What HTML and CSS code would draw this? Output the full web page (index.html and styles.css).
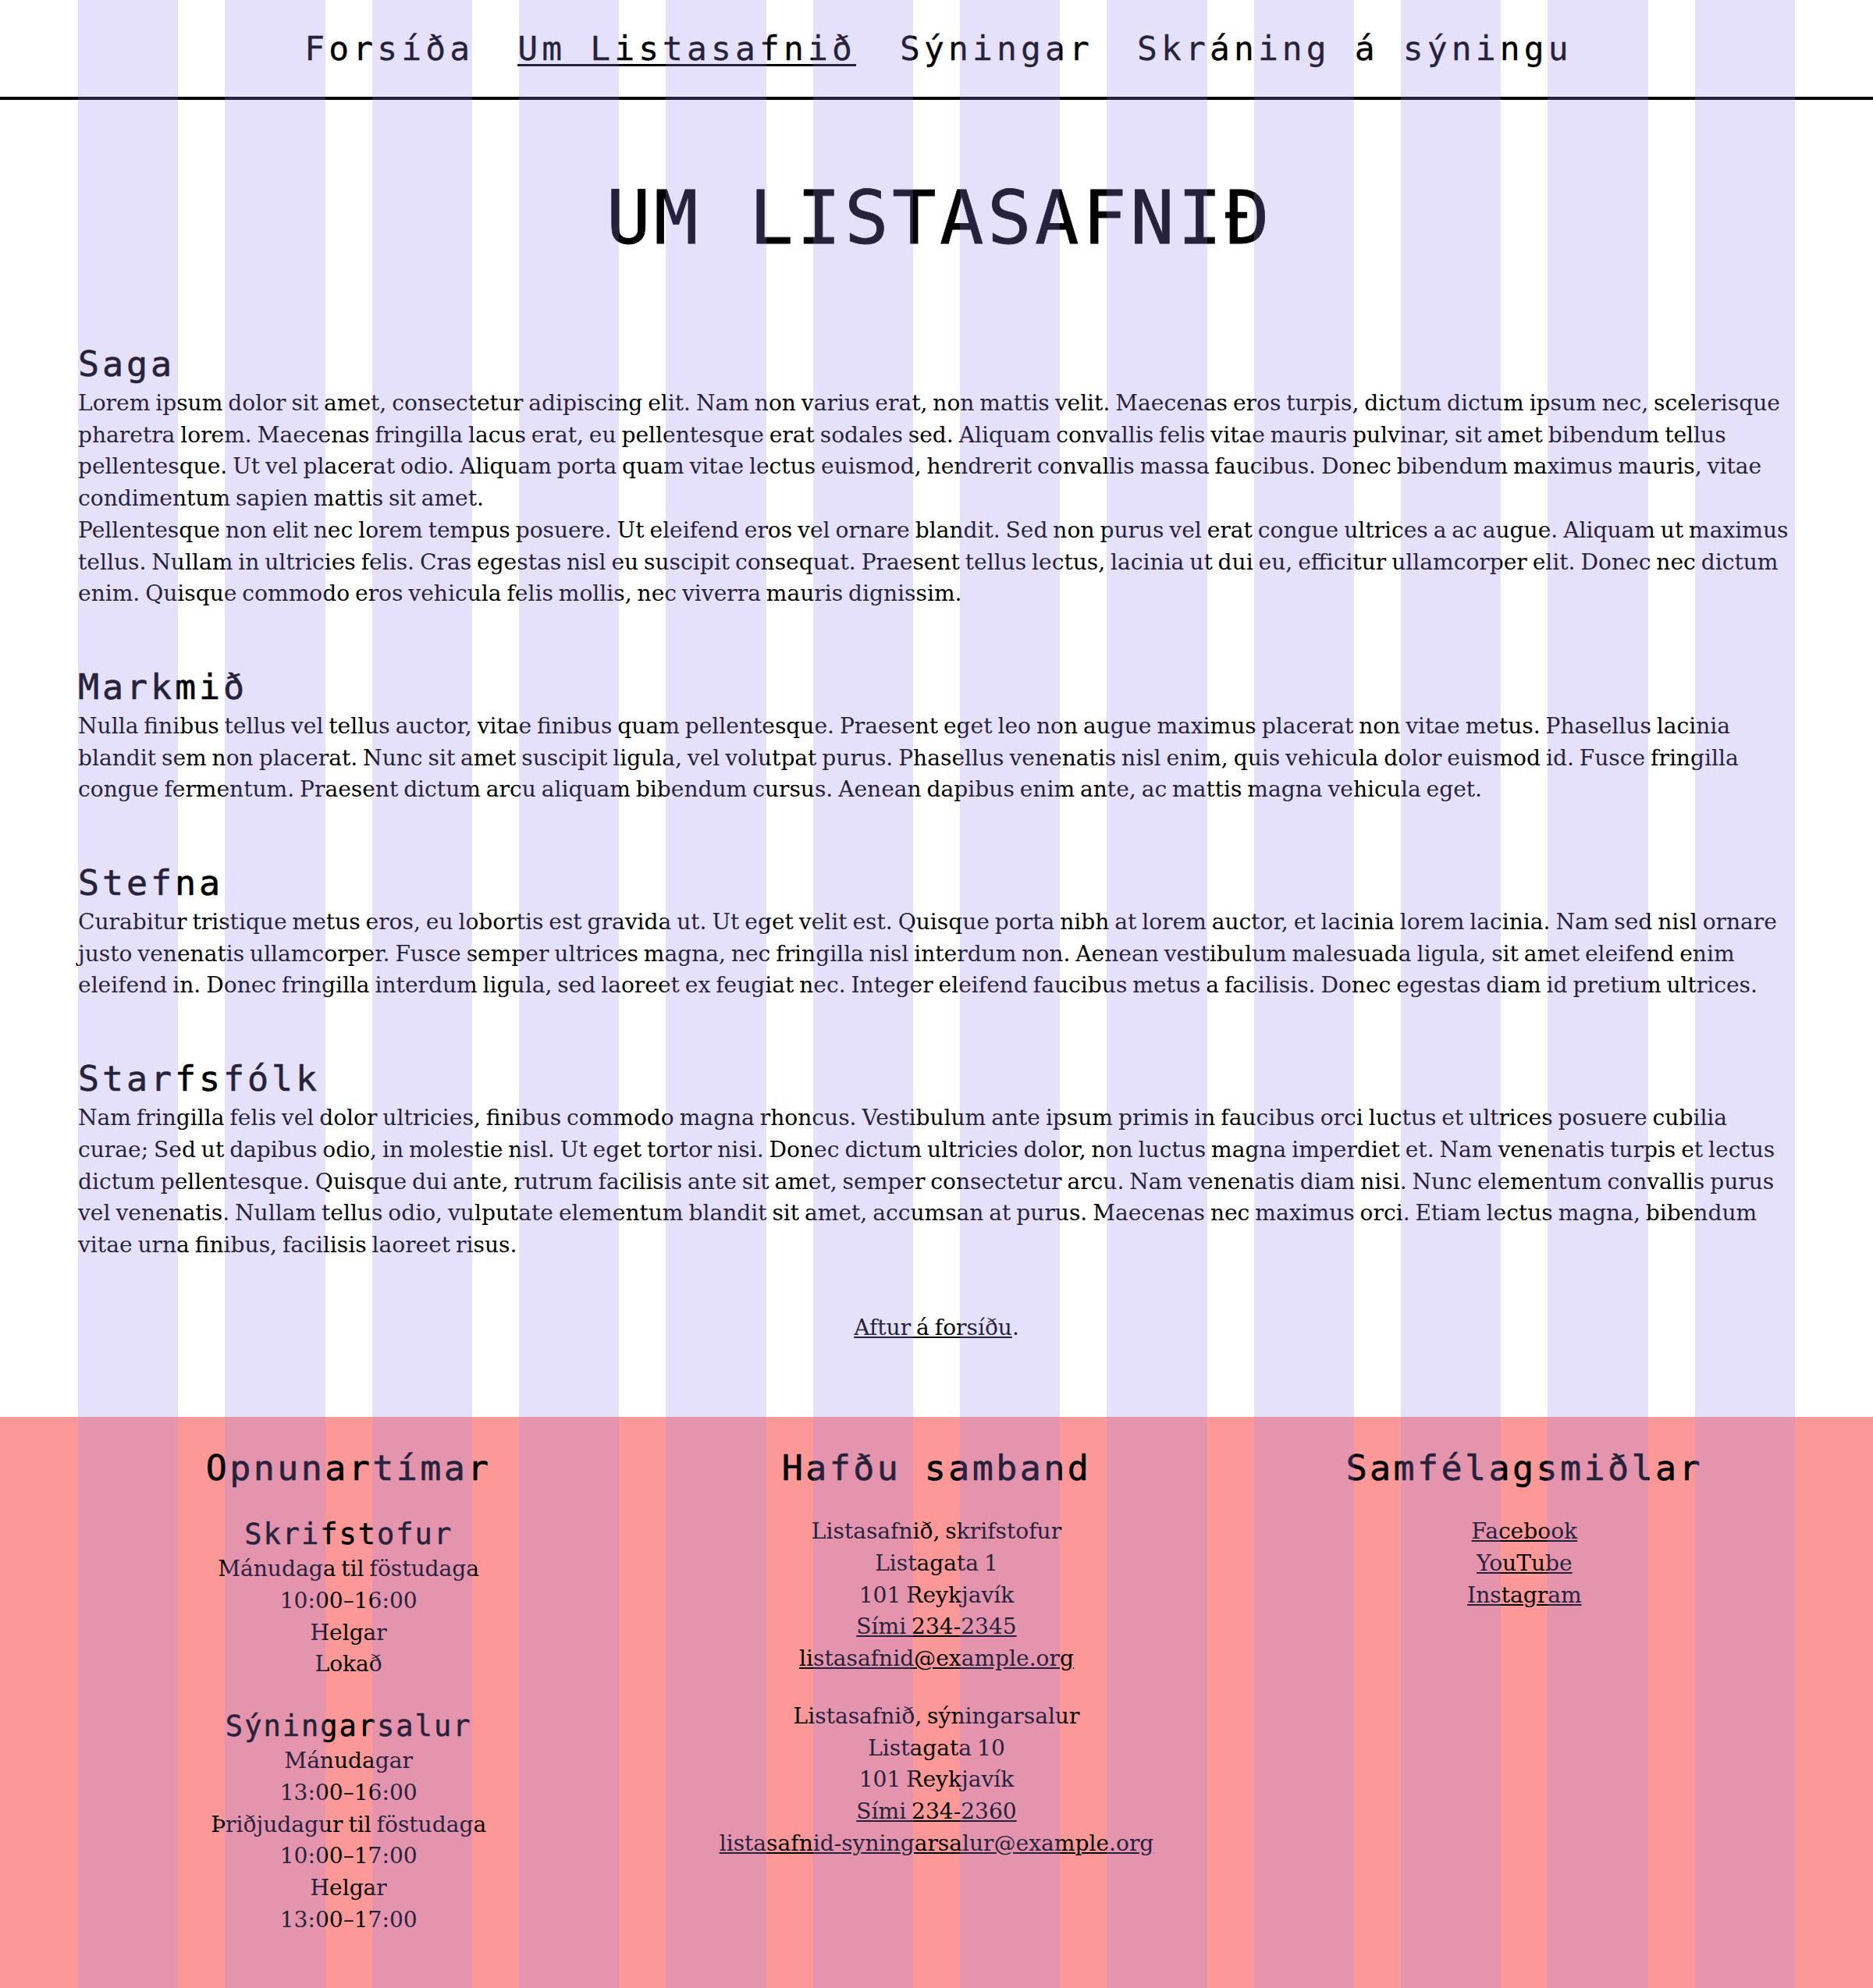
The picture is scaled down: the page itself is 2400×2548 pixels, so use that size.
FILE: index.html
```html
<!DOCTYPE html>
<html lang="is">
<head>
<meta charset="utf-8">
<title>Um Listasafnið</title>
<link rel="stylesheet" href="styles.css">
</head>
<body>
<header class="site-header">
  <nav>
    <ul class="nav">
      <li><a class="nav__link" href="#">Forsíða</a></li>
      <li><a class="nav__link nav__link--active" href="#">Um Listasafnið</a></li>
      <li><a class="nav__link" href="#">Sýningar</a></li>
      <li><a class="nav__link" href="#">Skráning á sýningu</a></li>
    </ul>
  </nav>
</header>

<main class="content">
  <h1 class="page-title">UM LISTASAFNIÐ</h1>

  <section class="section">
    <h2 class="section__title">Saga</h2>
    <p>Lorem ipsum dolor sit amet, consectetur adipiscing elit. Nam non varius erat, non mattis velit. Maecenas eros turpis, dictum dictum ipsum nec, scelerisque pharetra lorem. Maecenas fringilla lacus erat, eu pellentesque erat sodales sed. Aliquam convallis felis vitae mauris pulvinar, sit amet bibendum tellus pellentesque. Ut vel placerat odio. Aliquam porta quam vitae lectus euismod, hendrerit convallis massa faucibus. Donec bibendum maximus mauris, vitae condimentum sapien mattis sit amet.</p>
    <p>Pellentesque non elit nec lorem tempus posuere. Ut eleifend eros vel ornare blandit. Sed non purus vel erat congue ultrices a ac augue. Aliquam ut maximus tellus. Nullam in ultricies felis. Cras egestas nisl eu suscipit consequat. Praesent tellus lectus, lacinia ut dui eu, efficitur ullamcorper elit. Donec nec dictum enim. Quisque commodo eros vehicula felis mollis, nec viverra mauris dignissim.</p>
  </section>

  <section class="section">
    <h2 class="section__title">Markmið</h2>
    <p>Nulla finibus tellus vel tellus auctor, vitae finibus quam pellentesque. Praesent eget leo non augue maximus placerat non vitae metus. Phasellus lacinia blandit sem non placerat. Nunc sit amet suscipit ligula, vel volutpat purus. Phasellus venenatis nisl enim, quis vehicula dolor euismod id. Fusce fringilla congue fermentum. Praesent dictum arcu aliquam bibendum cursus. Aenean dapibus enim ante, ac mattis magna vehicula eget.</p>
  </section>

  <section class="section">
    <h2 class="section__title">Stefna</h2>
    <p>Curabitur tristique metus eros, eu lobortis est gravida ut. Ut eget velit est. Quisque porta nibh at lorem auctor, et lacinia lorem lacinia. Nam sed nisl ornare justo venenatis ullamcorper. Fusce semper ultrices magna, nec fringilla nisl interdum non. Aenean vestibulum malesuada ligula, sit amet eleifend enim eleifend in. Donec fringilla interdum ligula, sed laoreet ex feugiat nec. Integer eleifend faucibus metus a facilisis. Donec egestas diam id pretium ultrices.</p>
  </section>

  <section class="section">
    <h2 class="section__title">Starfsfólk</h2>
    <p>Nam fringilla felis vel dolor ultricies, finibus commodo magna rhoncus. Vestibulum ante ipsum primis in faucibus orci luctus et ultrices posuere cubilia curae; Sed ut dapibus odio, in molestie nisl. Ut eget tortor nisi. Donec dictum ultricies dolor, non luctus magna imperdiet et. Nam venenatis turpis et lectus dictum pellentesque. Quisque dui ante, rutrum facilisis ante sit amet, semper consectetur arcu. Nam venenatis diam nisi. Nunc elementum convallis purus vel venenatis. Nullam tellus odio, vulputate elementum blandit sit amet, accumsan at purus. Maecenas nec maximus orci. Etiam lectus magna, bibendum vitae urna finibus, facilisis laoreet risus.</p>
  </section>

  <p class="back"><a class="back__link" href="#">Aftur á forsíðu</a>.</p>
</main>

<footer class="site-footer">
  <div class="footer__col">
    <h2 class="footer__title">Opnunartímar</h2>
    <div class="hours">
      <h3 class="hours__title">Skrifstofur</h3>
      <p class="hours__text">Mánudaga til föstudaga<br>10:00–16:00<br>Helgar<br>Lokað</p>
    </div>
    <div class="hours">
      <h3 class="hours__title">Sýningarsalur</h3>
      <p class="hours__text">Mánudagar<br>13:00–16:00<br>Þriðjudagur til föstudaga<br>10:00–17:00<br>Helgar<br>13:00–17:00</p>
    </div>
  </div>

  <div class="footer__col">
    <h2 class="footer__title">Hafðu samband</h2>
    <address class="address">
      Listasafnið, skrifstofur<br>
      Listagata 1<br>
      101 Reykjavík<br>
      <a class="footer__link" href="#">Sími 234-2345</a><br>
      <a class="footer__link" href="#">listasafnid@example.org</a>
    </address>
    <address class="address">
      Listasafnið, sýningarsalur<br>
      Listagata 10<br>
      101 Reykjavík<br>
      <a class="footer__link" href="#">Sími 234-2360</a><br>
      <a class="footer__link" href="#">listasafnid-syningarsalur@example.org</a>
    </address>
  </div>

  <div class="footer__col">
    <h2 class="footer__title">Samfélagsmiðlar</h2>
    <ul class="social">
      <li><a class="footer__link" href="#">Facebook</a></li>
      <li><a class="footer__link" href="#">YouTube</a></li>
      <li><a class="footer__link" href="#">Instagram</a></li>
    </ul>
  </div>
</footer>

<div class="grid-overlay" aria-hidden="true">
  <span></span><span></span><span></span><span></span><span></span><span></span>
  <span></span><span></span><span></span><span></span><span></span><span></span>
</div>
</body>
</html>
```

FILE: styles.css
```css
html, body {
  margin: 0;
  padding: 0;
}

body {
  position: relative;
  min-height: 100vh;
  display: flex;
  flex-direction: column;
  font-family: "DejaVu Serif", serif;
  font-size: 28.1px;
  line-height: 40.7px;
  word-spacing: -2px;
  color: #000;
  background: #fff;
}

a {
  color: #000;
}

/* Header / navigation */
.site-header {
  border-bottom: 4px solid #000;
}

.nav {
  list-style: none;
  margin: 0;
  padding: 37px 0 37px 5px;
  display: flex;
  justify-content: center;
  gap: 56px;
  font-family: "DejaVu Sans Mono", monospace;
  font-size: 43px;
  line-height: 50px;
  letter-spacing: 5.1px;
  word-spacing: 0;
}

.nav__link {
  color: #000;
  text-decoration: none;
  -webkit-text-stroke: 0.3px #000;
}

.nav__link--active {
  text-decoration: underline;
  text-decoration-thickness: 3px;
  text-underline-offset: 5px;
}

/* Main content */
.content {
  padding: 0 100px 94px;
}

.page-title {
  margin: 98px 0 108px;
  padding-left: 8px;
  text-align: center;
  font-family: "DejaVu Sans Mono", monospace;
  font-size: 94px;
  line-height: 108px;
  letter-spacing: 4.4px;
  word-spacing: 0;
  font-weight: normal;
  -webkit-text-stroke: 0.8px #000;
}

.section + .section {
  margin-top: 74px;
}

.section__title {
  margin: 0 0 5px;
  font-family: "DejaVu Sans Mono", monospace;
  font-size: 45px;
  line-height: 50px;
  letter-spacing: 3.9px;
  word-spacing: 0;
  font-weight: normal;
  -webkit-text-stroke: 0.6px #000;
}

.section p {
  margin: 0;
}

.back {
  margin: 65px 0 0;
  text-align: center;
}

/* Footer */
.site-footer {
  flex: 1 0 auto;
  background: #fc9898;
  display: grid;
  grid-template-columns: repeat(3, 1fr);
  align-items: start;
  column-gap: 60px;
  padding: 41px 100px 66px;
  text-align: center;
}

.footer__title {
  margin: 0 0 36px;
  font-family: "DejaVu Sans Mono", monospace;
  font-size: 45px;
  line-height: 50px;
  letter-spacing: 3.4px;
  word-spacing: 0;
  font-weight: normal;
  -webkit-text-stroke: 0.6px #000;
}

.hours + .hours {
  margin-top: 35px;
}

.hours__title {
  margin: 0;
  font-family: "DejaVu Sans Mono", monospace;
  font-size: 37px;
  line-height: 48px;
  letter-spacing: 2px;
  word-spacing: 0;
  font-weight: normal;
  -webkit-text-stroke: 0.5px #000;
}

.hours__text {
  margin: 0;
}

.address {
  font-style: normal;
}

.address + .address {
  margin-top: 33px;
}

.social {
  list-style: none;
  margin: 0;
  padding: 0;
}

.footer__link {
  color: #000;
}

/* Layout grid overlay */
.grid-overlay {
  position: absolute;
  top: 0;
  right: 0;
  bottom: 0;
  left: 0;
  padding: 0 100px;
  display: grid;
  grid-template-columns: repeat(12, 1fr);
  column-gap: 60px;
  pointer-events: none;
  z-index: 10;
}

.grid-overlay span {
  background: rgba(155, 135, 235, 0.25);
}
```
